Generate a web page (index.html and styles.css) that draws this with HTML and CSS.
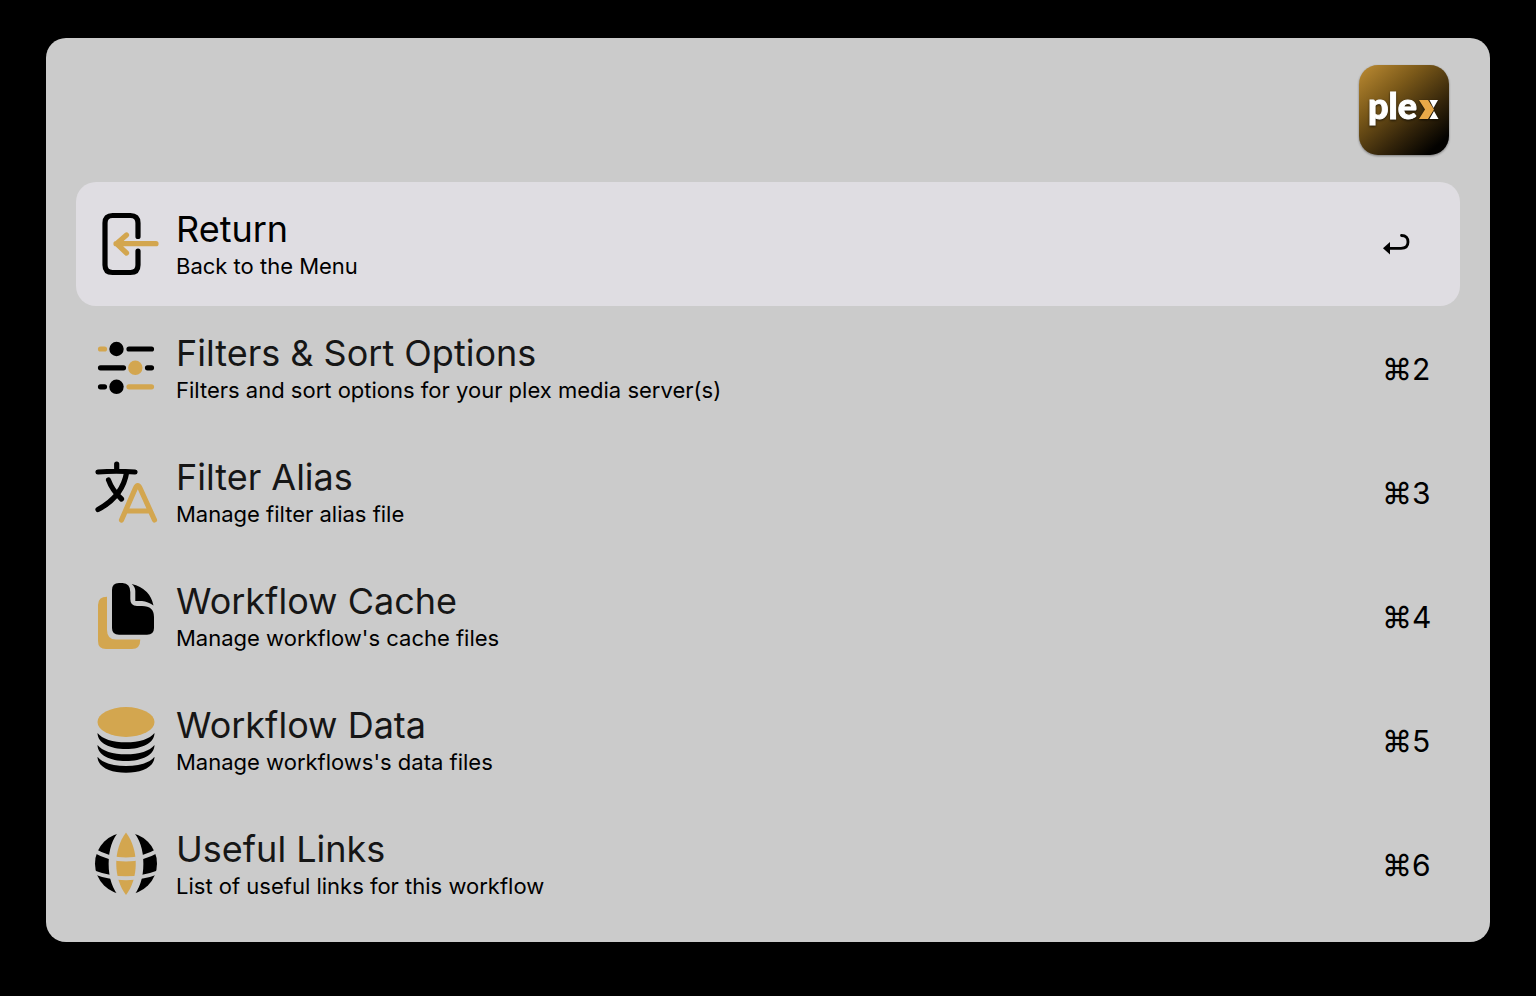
FILE: index.html
```html
<!DOCTYPE html>
<html lang="en">
<head>
<meta charset="utf-8">
<title>Plex workflow</title>
<link rel="stylesheet" href="styles.css">
</head>
<body>
<main class="panel">
  <header class="search">
    <input class="query" type="text" aria-label="Search" autocomplete="off">
    <svg class="logo" viewBox="0 0 90 90" role="img" aria-label="Plex">
      <defs><linearGradient id="gold" x1="0" y1="0" x2="0.85" y2="1"><stop offset="0" stop-color="#bd8c33"/><stop offset="0.35" stop-color="#7b5919"/><stop offset="0.7" stop-color="#33240a"/><stop offset="0.95" stop-color="#030200"/></linearGradient></defs>
      <rect width="90" height="90" rx="19" fill="url(#gold)"/>
      <g class="wordmark">
        <text x="9" y="54" class="logo-text">ple</text>
        <path fill="#e8a848" d="M60 35h9l6 9.500-6 9.500h-9l6-9.500z"/>
        <path fill="#fff" d="M70.500 35h8.500l-4.500 8zM75 46l4.500 8h-9z"/>
      </g>
    </svg>
  </header>
  <ul class="results">
    <li><button class="row selected" type="button">
      <svg class="icon" viewBox="0 0 68 68" aria-hidden="true"><path class="line" d="M46 26.500V13Q46 5.500 38.500 5.500H20.500Q13 5.500 13 13V55Q13 62.500 20.500 62.500H38.500Q46 62.500 46 55V41"/><path class="line accent" d="M64 33.700H24M34.500 25L24.500 33.700L34.500 43"/></svg>
      <span class="label"><span class="title">Return</span><span class="subtitle">Back to the Menu</span></span>
      <span class="key"><svg class="enter" viewBox="0 0 28 22" role="img" aria-label="Return key"><path d="M1 14.300L8 8V20.600Z"/><path class="hook" d="M7 14.300H19C24 14.300 26 11.500 26 8C26 4 24 1.500 19.500 1.500"/></svg></span>
    </button></li>
    <li><button class="row" type="button">
      <svg class="icon" viewBox="0 0 68 68" aria-hidden="true"><path class="line accent" d="M8.500 15H12.500M37 52.800H59.500"/><path class="line" d="M37 15H59.500M8.500 33.800H31.500M55.500 33.800H59.500M8.500 52.800H12.500"/><circle cx="24.500" cy="15" r="7.200"/><circle class="gold" cx="43.300" cy="33.800" r="7.200"/><circle cx="24.500" cy="52.800" r="7.200"/></svg>
      <span class="label"><span class="title">Filters &amp; Sort Options</span><span class="subtitle">Filters and sort options for your plex media server(s)</span></span>
      <span class="key">⌘2</span>
    </button></li>
    <li><button class="row" type="button">
      <svg class="icon" viewBox="0 0 68 68" aria-hidden="true"><path class="line" d="M24.700 6V12M6 14Q24 12.500 43 14M34.700 14C32 31 22 43 6 51.500M16.500 22Q20 32 29.500 41"/><path class="line accent" d="M29.500 62L43.500 30Q45.700 25 48 30L62.500 62M34 53H58.500"/></svg>
      <span class="label"><span class="title">Filter Alias</span><span class="subtitle">Manage filter alias file</span></span>
      <span class="key">⌘3</span>
    </button></li>
    <li><button class="row" type="button">
      <svg class="icon" viewBox="0 0 68 68" aria-hidden="true"><path class="gold" d="M15 14.700Q6 14.700 6 23V59Q6 67 14 67H40Q48.300 67 48.300 57.500H24Q15 57.500 15 48Z"/><path d="M27 1H30.500Q38.300 1.500 38.300 10V17Q38.300 24 45 24H50Q62 24 62 35V46Q62 52.700 55 52.700H27Q20 52.700 20 46V8Q20 1 27 1Z"/><path d="M39.700 2Q43.300 5 43.300 9V19H50Q56 19.500 61.500 23.500Q58 6.500 39.700 2Z"/></svg>
      <span class="label"><span class="title">Workflow Cache</span><span class="subtitle">Manage workflow's cache files</span></span>
      <span class="key">⌘4</span>
    </button></li>
    <li><button class="row" type="button">
      <svg class="icon" viewBox="0 0 68 68" aria-hidden="true"><ellipse class="gold" cx="34" cy="16" rx="28.500" ry="15"/><path id="disk" d="M5.500 27C10 33 21 36.300 34 36.300S58 33 62.500 27C62.500 37 50 43 34 43S5.500 37 5.500 27Z"/><use href="#disk" y="12"/><use href="#disk" y="23.800"/></svg>
      <span class="label"><span class="title">Workflow Data</span><span class="subtitle">Manage workflows's data files</span></span>
      <span class="key">⌘5</span>
    </button></li>
    <li><button class="row" type="button">
      <svg class="icon" viewBox="0 0 68 68" aria-hidden="true"><circle cx="34" cy="33.700" r="31"/><path class="gap" d="M33.500 1C17 16 17 51 33.500 67M34.500 1C51 16 51 51 34.500 67" stroke-width="9"/><path class="gold" d="M34 2.500C20.500 20 21.500 49 34 65C46.500 49 47.500 20 34 2.500Z"/><path class="gap" d="M1 20Q34 39 67 20M1 42Q34 54.500 67 42" stroke-width="4"/></svg>
      <span class="label"><span class="title">Useful Links</span><span class="subtitle">List of useful links for this workflow</span></span>
      <span class="key">⌘6</span>
    </button></li>
  </ul>
</main>
</body>
</html>
```
FILE: styles.css
```css
* { box-sizing: border-box; }
body {
  margin: 0;
  min-height: 100vh;
  padding: 38px 46px 54px;
  background: #000;
  color: #000;
  font-family: Inter, "Liberation Sans", sans-serif;
}
.panel {
  padding: 0 30px 16px;
  background: #cbcbcb;
  border-radius: 20px;
}
.search {
  display: flex;
  align-items: center;
  gap: 16px;
  height: 144px;
  padding: 0 11px 0 16px;
}
.query {
  flex: 1;
  min-width: 0;
  height: 80px;
  padding: 0;
  border: 0;
  outline: 0;
  background: transparent;
  font: 36px Inter, sans-serif;
}
.logo {
  width: 90px;
  height: 90px;
  overflow: visible;
  filter: drop-shadow(0 1px 1px #0006);
}
.logo-text {
  font: 900 36px Lato, sans-serif;
  fill: #fff;
  stroke: #fff;
  stroke-width: 1;
}
.wordmark { filter: drop-shadow(0 1px 1px #000a); }
.results { margin: 0; padding: 0; list-style: none; }
.row {
  display: flex;
  align-items: center;
  gap: 16px;
  width: 100%;
  height: 124px;
  padding: 0 16px;
  border: 0;
  border-radius: 20px;
  background: transparent;
  color: inherit;
  font: inherit;
  text-align: left;
}
.selected { background: #dfdde2; }
.icon { flex: none; width: 68px; height: 68px; }
.line {
  fill: none;
  stroke: #000;
  stroke-width: 5.2;
  stroke-linecap: round;
  stroke-linejoin: round;
}
.accent { stroke: #d3a64f; }
.gold { fill: #d3a64f; }
.gap { fill: none; stroke: #cbcbcb; }
.label { display: flex; flex: 1; flex-direction: column; min-width: 0; }
.title { font-size: 36px; line-height: 44px; color: #161616; }
.selected .title { color: #000; }
.subtitle { font-size: 22px; line-height: 30px; }
.key {
  flex: none;
  width: 62px;
  padding-top: 2px;
  font-size: 30px;
  line-height: 40px;
}
.enter { display: block; width: 28px; height: 22px; }
.hook { fill: none; stroke: #000; stroke-width: 2.8; stroke-linecap: round; }
```
